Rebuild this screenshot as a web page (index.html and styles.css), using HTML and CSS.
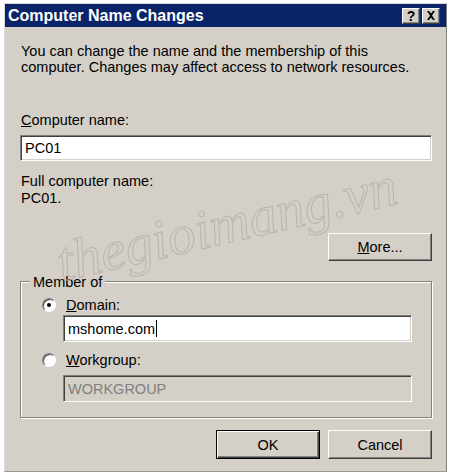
FILE: index.html
```html
<!DOCTYPE html>
<html>
<head>
<meta charset="utf-8">
<link rel="stylesheet" href="styles.css">
</head>
<body>
<div class="window">
  <div class="titlebar">
    <span class="title">Computer Name Changes</span>
    <div class="tbtns">
      <span class="tbtn help">?</span>
      <span class="tbtn close"><svg width="10" height="9" viewBox="0 0 10 9"><path d="M1 0h2l2 2.5L7 0h2L6 4.5 9 9H7L5 6.5 3 9H1l3-4.5z" fill="#000"/></svg></span>
    </div>
  </div>
  <div class="content">
    <p class="intro">You can change the name and the membership of this<br>computer. Changes may affect access to network resources.</p>
    <div class="label lbl-name"><u>C</u>omputer name:</div>
    <div class="field">PC01</div>
    <div class="fullname">Full computer name:<br>PC01.</div>
    <div class="more-row"><span class="btn more"><u>M</u>ore...</span></div>
    <div class="group">
      <span class="legend">Member of</span>
      <div class="radio-row first"><span class="radio checked"></span><span><u>D</u>omain:</span></div>
      <div class="field inset">mshome.com<span class="caret"></span></div>
      <div class="radio-row second"><span class="radio"></span><span><u>W</u>orkgroup:</span></div>
      <div class="field inset disabled">WORKGROUP</div>
    </div>
    <div class="actions">
      <span class="btn default">OK</span>
      <span class="btn">Cancel</span>
    </div>
  </div>
  <div class="watermark">thegioimang.vn</div>
</div>
</body>
</html>
```
FILE: styles.css
```css
html, body {
  margin: 0;
  padding: 0;
  background: #ffffff;
}
body {
  font-family: "Liberation Sans", Arial, sans-serif;
  font-size: 14.5px;
  color: #000;
}
.window {
  position: relative;
  margin: 3px 0 0 4px;
  width: 443px;
  height: 469px;
  box-sizing: border-box;
  background: #d4d0c8;
  border: 1px solid;
  border-color: #dcdad4 #808080 #9a9892 #dcdad4;
  overflow: hidden;
}
.titlebar {
  height: 23px;
  background: #0a246a;
  display: flex;
  align-items: center;
  justify-content: space-between;
  padding: 0 6px 0 3px;
}
.title {
  color: #fff;
  font-family: "Liberation Sans", Arial, sans-serif;
  font-weight: bold;
  font-size: 16px;
}
.tbtns {
  display: flex;
  gap: 2px;
}
.tbtn {
  width: 18px;
  height: 16px;
  box-sizing: border-box;
  background: #d4d0c8;
  border: 1px solid;
  border-color: #fff #404040 #404040 #fff;
  box-shadow: inset -1px -1px #808080;
  display: flex;
  align-items: center;
  justify-content: center;
  font-weight: bold;
  font-size: 14px;
  line-height: 1;
}
.content {
  padding: 0 14px 0 15px;
  display: flex;
  flex-direction: column;
}
.intro {
  margin: 16px 0 0 1px;
  line-height: 16px;
  white-space: nowrap;
}
.label {
  line-height: 16px;
  margin-left: 1px;
}
.lbl-name {
  margin-top: 37px;
}
.field {
  margin-top: 7px;
  height: 26px;
  box-sizing: border-box;
  background: #fff;
  border: 1px solid;
  border-color: #808080 #fff #fff #808080;
  box-shadow: inset 1px 1px #404040, inset -1px -1px #d4d0c8;
  padding: 0 4px;
  display: flex;
  align-items: center;
}
.fullname {
  margin: 12px 0 0 1px;
  line-height: 17px;
}
.more-row {
  margin-top: 26px;
  display: flex;
  justify-content: flex-end;
}
.btn {
  width: 104px;
  height: 28px;
  box-sizing: border-box;
  border: 1px solid;
  border-color: #fff #404040 #404040 #fff;
  box-shadow: inset -1px -1px #808080;
  background: #d4d0c8;
  display: flex;
  align-items: center;
  justify-content: center;
}
.group {
  position: relative;
  margin-top: 20px;
  height: 137px;
  box-sizing: border-box;
  border: 1px solid #808080;
  box-shadow: inset 1px 1px #fff, 1px 1px #fff;
  padding: 15px 19px 0 42px;
  display: flex;
  flex-direction: column;
}
.legend {
  position: absolute;
  left: 9px;
  top: -8px;
  padding: 0 3px;
  background: #d4d0c8;
  line-height: 16px;
}
.radio-row {
  display: flex;
  align-items: center;
  gap: 10px;
  height: 16px;
  margin-left: -21px;
}
.radio-row.second {
  margin-top: 10px;
}
.radio {
  width: 14px;
  height: 14px;
  box-sizing: border-box;
  border-radius: 50%;
  background: #fff;
  border: 1px solid;
  border-color: #808080 #fff #fff #808080;
  box-shadow: inset 1px 1px #404040;
  position: relative;
  display: flex;
  align-items: center;
  justify-content: center;
}
.radio.checked::after {
  content: "";
  width: 4px;
  height: 4px;
  border-radius: 50%;
  background: #000;
}
.group .field {
  margin-top: 2px;
  height: 27px;
}
.group .field.disabled {
  margin-top: 7px;
  background: #d4d0c8;
  color: #808080;
}
.caret {
  width: 1px;
  height: 17px;
  background: #000;
  margin-left: 1px;
}
.actions {
  margin-top: 12px;
  display: flex;
  justify-content: flex-end;
  gap: 8px;
}
.actions .btn {
  height: 29px;
}
.btn.default {
  border: 1px solid #000;
  box-shadow: inset 1px 1px #fff, inset -1px -1px #404040, inset -2px -2px #808080;
}
.watermark {
  position: absolute;
  left: 60px;
  top: 226px;
  font-family: "Liberation Serif", serif;
  font-style: italic;
  font-size: 56px;
  color: transparent;
  -webkit-text-stroke: 1px #b8b5ae;
  transform: rotate(-13deg);
  transform-origin: left bottom;
  pointer-events: none;
}
```
